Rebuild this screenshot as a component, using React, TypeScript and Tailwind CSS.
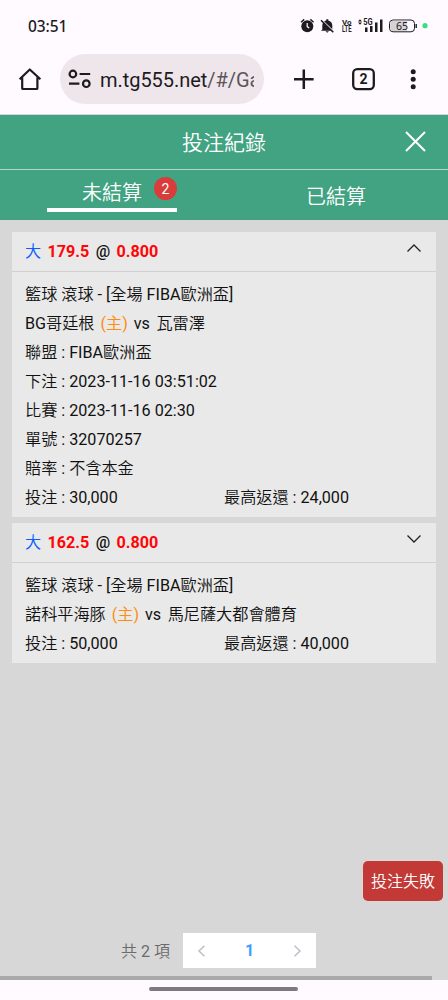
import React from 'react';

function Row({ children }: { children: React.ReactNode }) {
  return <div className="flex h-[29px] items-center whitespace-pre leading-[29px]">{children}</div>;
}

function StatusBar() {
  return (
    <div className="flex h-[54px] shrink-0 items-center pb-[2px] pl-[28px] text-[#1d1b1e]">
      <span className="w-[272px] font-['Noto_Sans',sans-serif] text-[15.5px] font-medium leading-[20px] tracking-[-0.1px]">03:51</span>
      <svg width="148" height="20" viewBox="300 16 148 20" fill="none" stroke="#1d1b1e">
        <circle cx="307.3" cy="26.2" r="6" fill="#1d1b1e" stroke="none" />
        <path d="M301 22.2l3.200-2.800M313.600 22.2l-3.200-2.800" strokeWidth="1.4" />
        <path d="M307.2 23v3.6l2 1.5" stroke="#fff" strokeWidth="1.2" />
        <path d="M322.3 29.6v-4c0-3 1.7-4.7 4-5.2v-1.1h2v1.1c2.5.5 4 2.4 4 5.2v4l1.4 1.1H321z" fill="#1d1b1e" stroke="none" />
        <path d="M325.4 31.2h3.600l-1.800 1.500z" fill="#1d1b1e" stroke="none" />
        <path d="M322 20.300l12 11.500" stroke="#fff" strokeWidth="1.300" />
        <path d="M321 20.300l12.300 12" strokeWidth="1.600" />
        <g fill="#1d1b1e" stroke="none" fontFamily="Roboto, sans-serif" fontWeight="700">
          <text x="342" y="24.800" fontSize="8" textLength="9.500" lengthAdjust="spacingAndGlyphs">Vo</text>
          <text x="342" y="32" fontSize="8.500" textLength="9.500" lengthAdjust="spacingAndGlyphs">LTE</text>
          <text x="363.300" y="25" fontSize="8.500" textLength="9.400" lengthAdjust="spacingAndGlyphs">5G</text>
          <path d="M358 21.400l2-2.200 2 2.200zM358 22.600h4l-2 2.200zM365 27.500h2.500v4.500H365zM370 26h2.500V32H370zM375 22.500h2.500v9.500H375zM380 19.500h2.500V32H380z" />
        </g>
        <rect x="389.500" y="20" width="25" height="11.800" rx="3.500" fill="#fffaff" />
        <path d="M393 20.700h14v10.400h-14q-2.800 0-2.800-2.800v-4.800q0-2.800 2.800-2.800z" fill="#d6d2d6" stroke="none" />
        <path d="M416.200 24v4" strokeWidth="1.400" />
        <text x="402" y="29.800" textAnchor="middle" fill="#1d1b1e" stroke="none" fontFamily="Noto Sans, sans-serif" fontSize="10.500">65</text>
        <circle cx="425" cy="25.700" r="2.600" fill="#3ddc84" stroke="none" />
      </svg>
    </div>
  );
}

function BrowserBar() {
  return (
    <div className="flex h-[61px] shrink-0 items-start border-b border-[#dccfd6]">
      <svg className="ml-[16px] mt-[11px]" width="28" height="28" viewBox="16 65 28 28" fill="none" stroke="#1d1b1e" strokeWidth="2.200">
        <path d="M22.200 77.500v10.700q0 .8.800.8h13.600q.8 0 .8-.8V77.500M19.600 79.300l10.200-9.800 10.600 9.800" strokeLinejoin="round" />
      </svg>
      <div className="ml-[16px] flex h-[50px] w-[204px] items-center rounded-full bg-[#efe6eb] pl-[6px]">
        <svg width="28" height="24" viewBox="66 67 28 24" fill="none" stroke="#1d1b1e" strokeWidth="2.200">
          <circle cx="72.900" cy="74" r="3.300" />
          <circle cx="86.300" cy="83.700" r="3.300" />
          <path d="M79.600 74h10.600M69 83.700h10.400" />
        </svg>
        <div className="ml-[6px] mt-[2px] w-[154px] overflow-hidden whitespace-nowrap font-[Roboto,sans-serif] text-[20px] leading-[30px] tracking-[-0.05px] text-[#1d1b1e]">
          m.tg555.net<span className="text-[#5b555a]">/#/Ga</span>
        </div>
      </div>
      <svg className="ml-[24px] mt-[9px]" width="140" height="32" viewBox="288 63 140 32" fill="none" stroke="#1d1b1e">
        <path d="M294 79.300h19.600M303.800 69.500v19.600" strokeWidth="2.500" />
        <rect x="353.200" y="69.200" width="20.600" height="19.900" rx="4" strokeWidth="2.300" />
        <text x="363.500" y="84.300" textAnchor="middle" fill="#1d1b1e" stroke="none" fontFamily="Roboto, sans-serif" fontWeight="700" fontSize="14">2</text>
        <g fill="#1d1b1e" stroke="none">
          <circle cx="413.200" cy="71.700" r="2.500" />
          <circle cx="413.200" cy="79.200" r="2.500" />
          <circle cx="413.200" cy="86.700" r="2.500" />
        </g>
      </svg>
    </div>
  );
}

type Bet = {
  line: string;
  odds: string;
  open: boolean;
  home: string;
  away: string;
  details: string[];
  stake: string;
  payout: string;
};

const bets: Bet[] = [
  {
    line: '179.5',
    odds: '0.800',
    open: true,
    home: 'BG哥廷根',
    away: '瓦雷澤',
    details: ['聯盟 : FIBA歐洲盃', '下注 : 2023-11-16 03:51:02', '比賽 : 2023-11-16 02:30', '單號 : 32070257', '賠率 : 不含本金'],
    stake: '30,000',
    payout: '24,000',
  },
  { line: '162.5', odds: '0.800', open: false, home: '諾科平海豚', away: '馬尼薩大都會體育', details: [], stake: '50,000', payout: '40,000' },
];

function BetCard({ bet }: { bet: Bet }) {
  return (
    <section className="bg-[#e9e9e9] text-[16.15px] text-[#111]">
      <header className="flex h-[40px] items-center justify-between border-b border-[#d0d0d0] pl-[13px] pr-[14px]">
        <div className="flex gap-[6.400px] leading-[29px]">
          <span className="font-normal text-[#0a5cff]">大</span>
          <span className="font-bold text-[#ff0505]">{bet.line}</span>
          <span className="font-medium">@</span>
          <span className="font-bold text-[#ff0505]">{bet.odds}</span>
        </div>
        <svg className="mb-[7px]" width="16" height="10" viewBox="0 0 16 10" fill="none" stroke="#222" strokeWidth="1.300">
          <path d={bet.open ? 'M1.500 8.500L8 2l6.500 6.500' : 'M1.500 1.500L8 8l6.500-6.500'} />
        </svg>
      </header>
      <div className="pb-[5px] pl-[13px] pt-[8px]">
        <Row>籃球 滾球 - [全場 FIBA歐洲盃]</Row>
        <Row>
          {bet.home}
          <span className="mx-[6px] text-[#ff8c0a]">(主)</span>
          vs
          <span className="ml-[6.500px]">{bet.away}</span>
        </Row>
        {bet.details.map((d) => (
          <Row key={d}>{d}</Row>
        ))}
        <Row>
          <span className="w-[199px]">投注 : {bet.stake}</span>
          <span>最高返還 : {bet.payout}</span>
        </Row>
      </div>
    </section>
  );
}

export default function App() {
  return (
    <div className="flex h-[1000px] w-[448px] flex-col overflow-hidden bg-[#fffaff] font-[Roboto,'Noto_Sans_CJK_TC_DemiLight','Noto_Sans_CJK_TC',sans-serif]">
      <StatusBar />
      <BrowserBar />
      <div className="grid h-[55px] shrink-0 grid-cols-[1fr_auto_1fr] items-center border-b border-[#b9d5ca] bg-[#41a381] text-white">
        <span />
        <h1 className="pt-[2px] font-[350] text-[21px] leading-[30px]">投注紀錄</h1>
        <svg className="mb-[1px] mr-[22px] justify-self-end" width="21" height="21" viewBox="0 0 21 21" fill="none" stroke="#fff" strokeWidth="2">
          <path d="M1 1l19 19M20 1L1 20" />
        </svg>
      </div>
      <div className="grid h-[50px] shrink-0 grid-cols-2 bg-[#41a381] text-[20px] font-[350] text-white">
        <div className="flex justify-center">
          <div className="flex h-[42px] w-[130px] items-start border-b-4 border-white pl-[35px] pt-[7px]">
            <span className="w-[72px] pt-[1px] leading-[30px]">未結算</span>
            <span className="flex h-[23px] w-[23px] items-center justify-center rounded-full bg-[#d83d3c] text-[14px] font-normal leading-[20px]">2</span>
          </div>
        </div>
        <div className="flex items-start justify-center pt-[12px] leading-[30px]">已結算</div>
      </div>
      <main className="flex h-[760px] shrink-0 flex-col gap-[6px] bg-[#d7d7d7] px-[12px] pt-[12px]">
        {bets.map((b) => (
          <BetCard key={b.line} bet={b} />
        ))}
        <div className="mt-auto -mr-[7px] flex justify-end">
          <div className="flex h-[40px] w-[80px] items-center justify-center rounded-[5px] bg-[#c23935] pt-[2px] text-[16px] text-white">投注失敗</div>
        </div>
        <div className="mt-[26px] flex items-center pb-[2px] pl-[109px] text-[16px]">
          <span className="w-[62px] whitespace-nowrap pt-[2px] text-[#6b6b6e]">共 2 項</span>
          <div className="flex h-[35px] w-[133px] items-center justify-between bg-white px-[14px]">
            <svg width="9" height="12" viewBox="0 0 9 12" fill="none" stroke="#bdbfc7" strokeWidth="1.500"><path d="M7.500 .8L2 6l5.500 5.200" /></svg>
            <span className="pt-[1px] font-bold text-[#409eff]">1</span>
            <svg width="9" height="12" viewBox="0 0 9 12" fill="none" stroke="#bdbfc7" strokeWidth="1.500"><path d="M1.500 .8L7 6l-5.500 5.200" /></svg>
          </div>
        </div>
        <div className="-mx-[12px] h-[4px] w-[432px] shrink-0 bg-[#a9a9a9]" />
      </main>
      <div className="flex h-[20px] items-start justify-start pl-[149px] pt-[7px]">
        <div className="h-[4px] w-[149px] rounded-full bg-[#7d797e]" />
      </div>
    </div>
  );
}
